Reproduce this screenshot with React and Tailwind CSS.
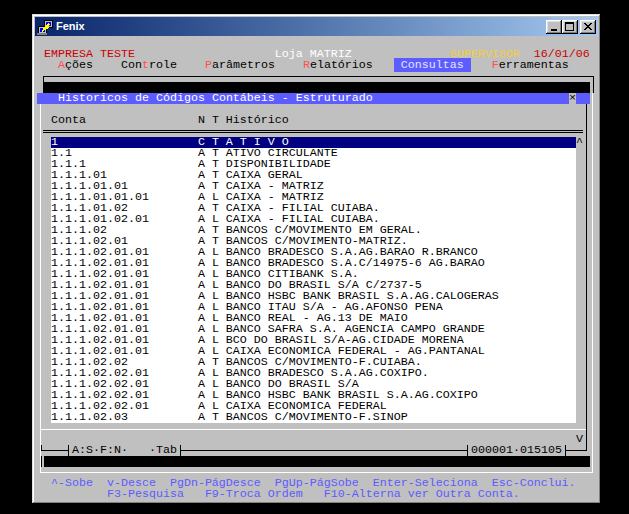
import React from "react";

const mono = "font-['Liberation_Mono',monospace] text-[11.67px] leading-[11px] whitespace-pre";

const pad = (s, n) => s + " ".repeat(Math.max(0, n - s.length));

const rows = [
  ["1", "C", "T", "A T I V O"],
  ["1.1", "A", "T", "ATIVO CIRCULANTE"],
  ["1.1.1", "A", "T", "DISPONIBILIDADE"],
  ["1.1.1.01", "A", "T", "CAIXA GERAL"],
  ["1.1.1.01.01", "A", "T", "CAIXA - MATRIZ"],
  ["1.1.1.01.01.01", "A", "L", "CAIXA - MATRIZ"],
  ["1.1.1.01.02", "A", "T", "CAIXA - FILIAL CUIABA."],
  ["1.1.1.01.02.01", "A", "L", "CAIXA - FILIAL CUIABA."],
  ["1.1.1.02", "A", "T", "BANCOS C/MOVIMENTO EM GERAL."],
  ["1.1.1.02.01", "A", "T", "BANCOS C/MOVIMENTO-MATRIZ."],
  ["1.1.1.02.01.01", "A", "L", "BANCO BRADESCO S.A.AG.BARAO R.BRANCO"],
  ["1.1.1.02.01.01", "A", "L", "BANCO BRADESCO S.A.C/14975-6 AG.BARAO"],
  ["1.1.1.02.01.01", "A", "L", "BANCO CITIBANK S.A."],
  ["1.1.1.02.01.01", "A", "L", "BANCO DO BRASIL S/A C/2737-5"],
  ["1.1.1.02.01.01", "A", "L", "BANCO HSBC BANK BRASIL S.A.AG.CALOGERAS"],
  ["1.1.1.02.01.01", "A", "L", "BANCO ITAU S/A - AG.AFONSO PENA"],
  ["1.1.1.02.01.01", "A", "L", "BANCO REAL - AG.13 DE MAIO"],
  ["1.1.1.02.01.01", "A", "L", "BANCO SAFRA S.A. AGENCIA CAMPO GRANDE"],
  ["1.1.1.02.01.01", "A", "L", "BCO DO BRASIL S/A-AG.CIDADE MORENA"],
  ["1.1.1.02.01.01", "A", "L", "CAIXA ECONOMICA FEDERAL - AG.PANTANAL"],
  ["1.1.1.02.02", "A", "T", "BANCOS C/MOVIMENTO-F.CUIABA."],
  ["1.1.1.02.02.01", "A", "L", "BANCO BRADESCO S.A.AG.COXIPO."],
  ["1.1.1.02.02.01", "A", "L", "BANCO DO BRASIL S/A"],
  ["1.1.1.02.02.01", "A", "L", "BANCO HSBC BANK BRASIL S.A.AG.COXIPO"],
  ["1.1.1.02.02.01", "A", "L", "CAIXA ECONOMICA FEDERAL"],
  ["1.1.1.02.03", "A", "T", "BANCOS C/MOVIMENTO-F.SINOP"],
];

const FenixIcon = () => (
  <svg width="16" height="16" viewBox="0 0 16 16" shapeRendering="crispEdges">
    {/* back computer */}
    <rect x="7" y="1" width="8" height="7" fill="#c0c0c0" stroke="#000" strokeWidth="1" />
    <rect x="8.5" y="2.5" width="5" height="4" fill="#0000ff" />
    {/* front computer */}
    <rect x="1" y="7" width="8" height="7" fill="#c0c0c0" stroke="#000" strokeWidth="1" />
    <rect x="2.5" y="8.5" width="5" height="4" fill="#0000ff" />
    <rect x="0" y="14" width="10" height="2" fill="#808080" />
    {/* bolt */}
    <path d="M12 5 L8 9 L10 9 L5 12" stroke="#ffff00" strokeWidth="1.6" fill="none" />
  </svg>
);

const TitleButton = ({ children }) => (
  <div className="flex h-[14px] w-[16px] items-center justify-center bg-[#c0c0c0] shadow-[inset_-1px_-1px_#000,inset_1px_1px_#fff,inset_-2px_-2px_#808080,inset_2px_2px_#dfdfdf]">
    {children}
  </div>
);

// horizontal line piece sitting in the upper half of a status cell
const HLine = ({ w }) => <div className={`${w} h-[6px] shrink-0 border-b border-black`} />;

export default function App() {
  return (
    <div className="h-[514px] w-[629px] bg-black pl-[32px] pt-[14px]">
      {/* window */}
      <div className="flex h-[490px] w-[569px] flex-col bg-[#c0c0c0] p-[3px] shadow-[inset_-1px_-1px_#000,inset_1px_1px_#dfdfdf,inset_-2px_-2px_#808080,inset_2px_2px_#fff]">
        {/* title bar */}
        <div className="flex h-[19px] shrink-0 items-center bg-gradient-to-r from-[#0a246a] to-[#a6caf0] pl-[2px] pr-[2px]">
          <FenixIcon />
          <span className="ml-[3px] font-['Liberation_Sans',sans-serif] text-[11px] font-bold text-white">Fenix</span>
          <div className="ml-auto flex items-center">
            <TitleButton>
              <div className="mt-[6px] ml-[-1px] h-[2px] w-[6px] bg-black" />
            </TitleButton>
            <TitleButton>
              <div className="ml-[-1px] h-[9px] w-[9px] border border-t-2 border-black" />
            </TitleButton>
            <div className="ml-[2px]">
              <TitleButton>
                <svg width="8" height="7" viewBox="0 0 8 7" className="ml-[-1px]" shapeRendering="crispEdges">
                  <path d="M0 0h2v1h-2zM6 0h2v1h-2zM1 1h2v1h-2zM5 1h2v1h-2zM2 2h4v1h-4zM3 3h2v1h-2zM2 4h4v1h-4zM1 5h2v1h-2zM5 5h2v1h-2zM0 6h2v1h-2zM6 6h2v1h-2z" fill="#000" />
                </svg>
              </TitleButton>
            </div>
          </div>
        </div>

        {/* console client: 80 cols x 42 rows of 7x11 cells */}
        <div className={`mx-[2px] mt-[2px] flex h-[462px] w-[560px] shrink-0 flex-col bg-[#c0c0c0] ${mono}`}>
          {/* row 0 */}
          <div className="h-[11px] shrink-0" />
          {/* row 1 */}
          <div className="h-[11px] shrink-0">
            {" "}
            <span className="text-[#cc0000]">EMPRESA TESTE</span>
            {" ".repeat(20)}
            <span className="text-white">Loja MATRIZ</span>
            {" ".repeat(14)}
            <span className="text-[#f5cd3d]">SUPERVISOR</span>
            {"  "}
            <span className="text-[#cc0000]">16/01/06</span>
          </div>
          {/* row 2: menu */}
          <div className="h-[11px] shrink-0 text-black">
            {"   "}
            <span className="text-[#ff5050]">A</span>ções{"    "}
            Con<span className="text-[#ff5050]">t</span>role{"    "}
            <span className="text-[#ff5050]">P</span>arâmetros{"    "}
            <span className="text-[#ff5050]">R</span>elatórios{"   "}
            <span className="bg-[#5c5cff] text-[#e4e4ff]"> Consultas </span>
            {"   "}
            <span className="text-[#ff5050]">F</span>erramentas
          </div>

          {/* rows 3-4: top frame line with black bar */}
          <div className="ml-[6px] mt-[5px] h-[17px] w-[551px] shrink-0 border-x border-t border-black bg-black shadow-[inset_0_5px_#c0c0c0,inset_-3px_0_#c0c0c0]" />

          {/* row 5: dialog title */}
          <div className="flex h-[11px] shrink-0">
            <div className="flex w-[553px] bg-[#5c5cff] text-white">
              <span className="w-[532px] pl-[21px]">Historicos de Códigos Contábeis - Estruturado</span>
              <span className="w-[7px] bg-[#c0c0c0] text-center text-black">×</span>
            </div>
            <div className="ml-[2px] w-[1px] bg-white" />
          </div>

          {/* rows 6-39: dialog body */}
          <div className="ml-[3px] h-[369px] w-[553px] shrink-0 border-x border-b border-white">
            <div className="h-[341px] w-[546px] border-r border-black">
              {/* row 6 */}
              <div className="h-[11px]" />
              {/* row 7: header */}
              <div className="h-[11px] pl-[10px] text-black">{pad("Conta", 21) + "N T Histórico"}</div>
              {/* row 8: double line */}
              <div className="h-[11px] pt-[4px]">
                <div className="ml-[2px] h-[3px] w-[540px] border-y border-black" />
              </div>
              {/* rows 9-34: list */}
              <div className="flex">
                <div className="ml-[10px] w-[525px] bg-white">
                  {rows.map(([conta, n, t, hist], i) => (
                    <div
                      key={i}
                      className={`h-[11px] ${i === 0 ? "bg-[#000080] text-white" : "text-black"}`}
                    >
                      {pad(conta, 21) + n + " " + t + " " + hist}
                    </div>
                  ))}
                </div>
                <div className="w-[7px] text-black">
                  <div className="h-[11px]">^</div>
                </div>
              </div>
              {/* row 35 */}
              <div className="h-[11px] pt-[6px]">
                <div className="ml-[-1px] w-[546px] border-t border-white" />
              </div>
              {/* row 36 */}
              <div className="h-[11px] pl-[535px] text-black">V</div>
            </div>

            {/* row 37: status line */}
            <div className="flex h-[11px] text-black">
              <div className="h-[6px] w-[3px] shrink-0 border-b border-l border-black" />
              <HLine w="w-[21px]" />
              <HLine w="w-[3px]" />
              <div className="h-[11px] w-[1px] shrink-0 bg-black" />
              <div className="w-[3px] shrink-0" />
              <div className="w-[105px] shrink-0">A:S·F:N·   ·Tab</div>
              <div className="w-[3px] shrink-0" />
              <div className="h-[11px] w-[1px] shrink-0 bg-black" />
              <HLine w="w-[3px]" />
              <HLine w="w-[280px]" />
              <HLine w="w-[3px]" />
              <div className="h-[11px] w-[1px] shrink-0 bg-black" />
              <div className="w-[3px] shrink-0" />
              <div className="w-[91px] shrink-0">000001·015105</div>
              <div className="w-[3px] shrink-0" />
              <div className="h-[11px] w-[1px] shrink-0 bg-black" />
              <HLine w="w-[3px]" />
              <HLine w="w-[14px]" />
              <div className="h-[6px] w-[4px] shrink-0 border-b border-r border-black" />
            </div>

            {/* row 38: black bar */}
            <div className="flex h-[11px]">
              <div className="w-[1px] bg-black" />
              <div className="ml-[2px] w-[546px] bg-black" />
            </div>
          </div>
          <div className="h-[5px] shrink-0" />

          {/* rows 40-41: key help */}
          <div className="h-[11px] shrink-0 text-[#5c5cff]">
            {"  ^-Sobe  v-Desce  PgDn-PágDesce  PgUp-PágSobe  Enter-Seleciona  Esc-Conclui."}
          </div>
          <div className="h-[11px] shrink-0 text-[#5c5cff]">
            {" ".repeat(10) + "F3-Pesquisa   F9-Troca Ordem   F10-Alterna ver Outra Conta."}
          </div>
        </div>
      </div>
    </div>
  );
}
